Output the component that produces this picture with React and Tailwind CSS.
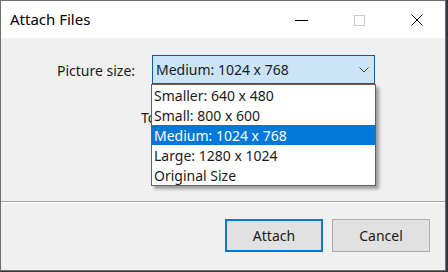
const sizes = [
  "Smaller: 640 x 480",
  "Small: 800 x 600",
  "Medium: 1024 x 768",
  "Large: 1280 x 1024",
  "Original Size",
];

export default function App() {
  return (
    <div className="w-[448px] h-[272px] bg-[#2f3a40] font-['Noto_Sans',sans-serif] text-[#1a1a1a] overflow-hidden">
      <div className="w-[446px] h-[271px] border border-[#6f6f6f] bg-[#f0f0f0] flex flex-col">
        {/* Title bar */}
        <div className="h-[37px] bg-white flex items-center shrink-0">
          <span className="pl-[9px] text-[15px] text-black leading-none">Attach Files</span>
          <div className="ml-auto flex h-full pr-[5px]">
            <div className="w-[46px] flex items-center justify-center">
              <div className="w-[13px] h-px bg-black mt-[1px]" />
            </div>
            <div className="w-[46px] ml-[12px] flex items-center justify-center">
              <div className="w-[11px] h-[11px] border border-[#c8c8c8] mt-[1px]" />
            </div>
            <div className="w-[46px] ml-[12px] flex items-center justify-center">
              <svg width="12" height="12" viewBox="0 0 12 12" className="mt-[1px]">
                <path d="M0.5 0.5 L11.5 11.5 M11.5 0.5 L0.5 11.5" stroke="#000" strokeWidth="1" />
              </svg>
            </div>
          </div>
        </div>

        {/* Body */}
        <div className="h-[163px] shrink-0 pt-[17px] pl-[56px] relative">
          <div className="flex items-start">
            <span className="text-[14px] mt-[5px] w-[95px]">Picture size:</span>
            <div className="relative">
              <div className="w-[223px] h-[29px] border border-[#0a5ea6] bg-[#cce4f7] flex items-center pl-[3px] pr-[5px]">
                <span className="text-[14px]">Medium: 1024 x 768</span>
                <svg width="10" height="6" viewBox="0 0 10 6" className="ml-auto">
                  <path d="M0.5 0.5 L5 5 L9.5 0.5" stroke="#444" strokeWidth="1" fill="none" />
                </svg>
              </div>
              {/* Dropdown list */}
              <div className="absolute left-[-1px] top-[29px] w-[225px] bg-white border border-[#646464] shadow-[3px_3px_3px_rgba(0,0,0,0.35)] z-10">
                {sizes.map((s) => (
                  <div
                    key={s}
                    className={
                      s === "Medium: 1024 x 768"
                        ? "h-[20px] flex items-center pl-[2px] text-[14px] bg-[#0078d7] text-white"
                        : "h-[20px] flex items-center pl-[2px] text-[14px]"
                    }
                  >
                    {s}
                  </div>
                ))}
              </div>
            </div>
          </div>
          <div className="mt-[23px] ml-[84px] w-[10px] overflow-hidden whitespace-nowrap text-[14px]">To</div>
        </div>

        {/* Separator */}
        <div className="h-px bg-[#a0a0a0] shrink-0" />
        <div className="h-px bg-white shrink-0" />

        {/* Footer */}
        <div className="flex justify-end gap-[9px] pt-[16px] pr-[15px]">
          <button className="w-[98px] h-[33px] border-2 border-[#0078d7] bg-[#e1e1e1] text-[14px]">
            Attach
          </button>
          <button className="w-[98px] h-[33px] border border-[#adadad] bg-[#e1e1e1] text-[14px]">
            Cancel
          </button>
        </div>
      </div>
    </div>
  );
}
